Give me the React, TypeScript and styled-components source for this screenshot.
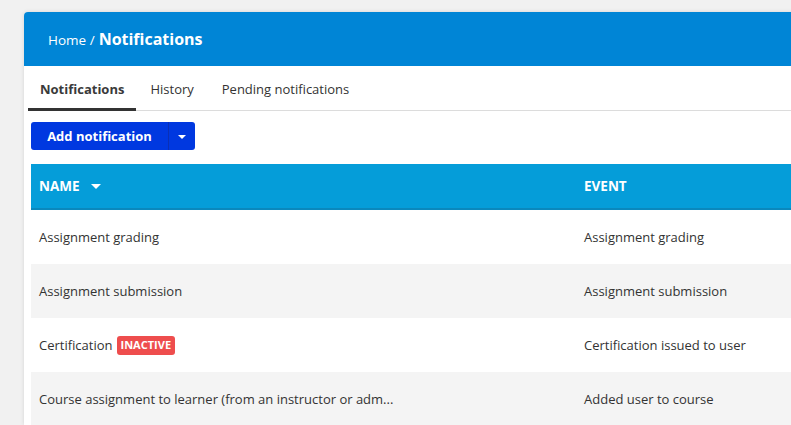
import styled, { createGlobalStyle } from 'styled-components';

const GlobalStyle = createGlobalStyle`
  html, body {
    margin: 0;
    padding: 0;
    background: #f1f1f1;
    font-family: "Open Sans", "Noto Sans", sans-serif;
    overflow: hidden;
  }
`;

const Page = styled.div`
  padding: 12px 0 0 24px;
  height: 425px;
  box-sizing: border-box;
`;

const Card = styled.section`
  background: #fff;
  border-radius: 4px 0 0 0;
  box-shadow: 0 0 4px rgba(0, 0, 0, 0.12);
  width: 800px;
  height: 413px;
  overflow: hidden;
`;

const Header = styled.header`
  height: 54px;
  background: #0085d6;
  display: flex;
  align-items: center;
  padding: 0 24px;
  color: #fff;
`;

const Crumb = styled.span`
  font-size: 13.5px;
  margin-right: 4px;
  padding-top: 2px;
`;

const Title = styled.h1`
  margin: 0;
  font-size: 16px;
  font-weight: 700;
`;

const Tabs = styled.nav`
  display: flex;
  margin: 0 4px;
  border-bottom: 1px solid #dcdcdc;
  height: 44px;
`;

const Tab = styled.div<{ $active?: boolean }>`
  padding: 4px ${p => (p.$active ? 12 : 14)}px 0;
  display: flex;
  align-items: center;
  font-size: 13px;
  font-weight: ${p => (p.$active ? 700 : 400)};
  color: ${p => (p.$active ? '#3a3a3a' : '#333')};
  border-bottom: 3px solid ${p => (p.$active ? '#333' : 'transparent')};
  margin-bottom: -1px;
`;

const Body = styled.div`
  padding: 11px 0 0 7px;
`;

const SplitButton = styled.div`
  display: flex;
  width: fit-content;
  height: 28px;
  background: #0038e0;
  border-radius: 3px;
  color: #fff;
  margin-bottom: 14px;
`;

const MainAction = styled.button`
  border: none;
  background: transparent;
  color: #fff;
  font-family: inherit;
  font-weight: 700;
  font-size: 13px;
  white-space: nowrap;
  box-sizing: border-box;
  padding: 0;
  width: 138px;
  border-right: 1px solid #0a2fb5;
`;

const Caret = styled.span<{ $size?: number }>`
  display: inline-block;
  width: 0;
  height: 0;
  border-left: ${p => p.$size ?? 4}px solid transparent;
  border-right: ${p => p.$size ?? 4}px solid transparent;
  border-top: ${p => p.$size ?? 4}px solid #fff;
`;

const DropAction = styled.button`
  border: none;
  background: transparent;
  width: 26px;
  display: flex;
  align-items: center;
  justify-content: center;
  padding: 2px 0 0;
`;

const Table = styled.div`
  width: 780px;
`;

const HeadRow = styled.div`
  display: grid;
  grid-template-columns: 545px 1fr;
  height: 44px;
  background: #059dd9;
  border-bottom: 2px solid #0a88bd;
  align-items: center;
  color: #fff;
  font-size: 13.5px;
  font-weight: 700;
`;

const HeadCell = styled.div`
  padding-left: 8px;
  display: flex;
  align-items: center;
  gap: 11px;
`;

const Row = styled.div<{ $striped?: boolean }>`
  display: grid;
  grid-template-columns: 545px 1fr;
  height: 54px;
  align-items: center;
  background: ${p => (p.$striped ? '#f4f4f4' : '#fff')};
  font-size: 13px;
  color: #333;
`;

const Cell = styled.div`
  padding-left: 8px;
  white-space: nowrap;
  display: flex;
  align-items: center;
`;

const Badge = styled.span`
  background: #ee4d4d;
  color: #fff;
  font-size: 11px;
  font-weight: 700;
  border-radius: 3px;
  padding: 1px 4px 2px;
  margin-left: 4px;
  line-height: 16px;
`;

const rows = [
  { name: 'Assignment grading', event: 'Assignment grading' },
  { name: 'Assignment submission', event: 'Assignment submission' },
  { name: 'Certification', event: 'Certification issued to user', inactive: true },
  { name: 'Course assignment to learner (from an instructor or adm...', event: 'Added user to course' },
];

export default function App() {
  return (
    <>
      <GlobalStyle />
      <Page>
        <Card>
          <Header>
            <Crumb>Home /</Crumb>
            <Title>Notifications</Title>
          </Header>
          <Tabs>
            <Tab $active>Notifications</Tab>
            <Tab>History</Tab>
            <Tab>Pending notifications</Tab>
          </Tabs>
          <Body>
            <SplitButton>
              <MainAction>Add notification</MainAction>
              <DropAction>
                <Caret $size={4} />
              </DropAction>
            </SplitButton>
            <Table>
              <HeadRow>
                <HeadCell>
                  NAME <Caret $size={5} />
                </HeadCell>
                <HeadCell>EVENT</HeadCell>
              </HeadRow>
              {rows.map((r, i) => (
                <Row key={r.name} $striped={i % 2 === 1}>
                  <Cell>
                    {r.name}
                    {r.inactive && <Badge>INACTIVE</Badge>}
                  </Cell>
                  <Cell>{r.event}</Cell>
                </Row>
              ))}
            </Table>
          </Body>
        </Card>
      </Page>
    </>
  );
}
